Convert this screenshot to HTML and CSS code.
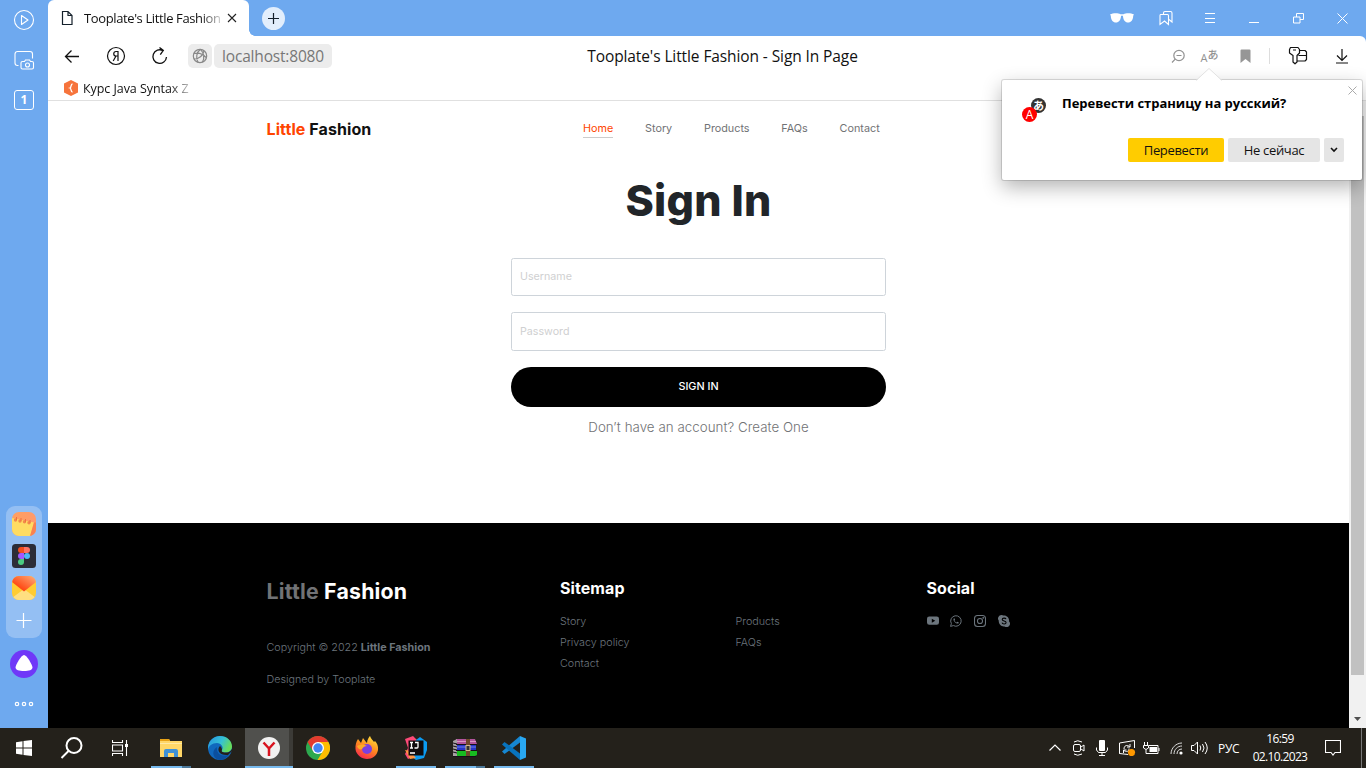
FILE: index.html
```html
<!DOCTYPE html>
<html lang="en">
<head>
<meta charset="utf-8">
<title>Tooplate's Little Fashion - Sign In Page</title>
<link rel="stylesheet" href="styles.css">
</head>
<body>
<div class="desktop">
  <div class="browser">
    <aside class="side">
      <div class="side-top">
        <svg width="22" height="22" viewBox="0 0 22 22" fill="none" stroke="#fff" stroke-width="1.1"><circle cx="11" cy="11" r="9.5"/><path d="M8.5 6.5v9l6.5-4.500z" stroke-linejoin="round"/></svg>
        <svg width="22" height="22" viewBox="0 0 22 22" fill="none" stroke="#fff" stroke-width="1.1"><path d="M5.500 16.500H4.500a2.500 2.500 0 0 1-2.500-2.500V5a2.500 2.500 0 0 1 2.500-2.500h12.500a2.500 2.500 0 0 1 2.500 2.500v4.500"/><path d="M9.500 12.500h2l1-1.500h4l1 1.500h1.500a1.500 1.500 0 0 1 1.500 1.500v4.500a1.500 1.500 0 0 1-1.500 1.500h-9.500a1.500 1.500 0 0 1-1.500-1.500V14a1.500 1.500 0 0 1 1.500-1.500z"/><circle cx="14.500" cy="16" r="2"/></svg>
        <div class="tab-count">1</div>
      </div>
      <div class="side-bottom">
        <div class="dock">
          <svg width="24" height="24" viewBox="0 0 24 24"><defs><linearGradient id="nt" x1="0" x2="1"><stop offset="0" stop-color="#ffa060"/><stop offset="1" stop-color="#ff9a6b"/></linearGradient><clipPath id="rc"><rect width="24" height="24" rx="7"/></clipPath></defs><g clip-path="url(#rc)"><rect width="24" height="24" fill="url(#nt)"/><path d="M0 6l22 4.500L18 25H0z" fill="#ffdc62"/><path d="M22 10.500h2V24h-6z" fill="#f9824f"/><g fill="#f28a4a"><circle cx="3.500" cy="8" r="1.700"/><circle cx="8" cy="9" r="1.700"/><circle cx="12.500" cy="9.800" r="1.700"/><circle cx="17" cy="10.700" r="1.700"/></g><path d="M4.500 5v3M9 6v3M13.500 7v3M18 8v3" stroke="#f0703f" stroke-width="1"/></g></svg>
          <svg width="24" height="24" viewBox="0 0 24 24"><rect width="24" height="24" rx="3.500" fill="#2c2d38"/><path d="M12 3H9a3 3 0 0 0 0 6h3z" fill="#f24e1e"/><path d="M12 3h3a3 3 0 0 1 0 6h-3z" fill="#ff7262"/><path d="M12 9H9a3 3 0 0 0 0 6h3z" fill="#a259ff"/><circle cx="15" cy="12" r="3" fill="#4db8f5"/><path d="M12 15H9a3 3 0 1 0 3 3z" fill="#4bcb83"/></svg>
          <svg width="24" height="24" viewBox="0 0 24 24"><defs><linearGradient id="ml" x1="0" y1="1" x2="1" y2="0"><stop offset=".3" stop-color="#ff4b16"/><stop offset="1" stop-color="#ffae79"/></linearGradient></defs><g clip-path="url(#rc)"><rect width="24" height="24" fill="#ffcc32"/><path d="M0 25v-3l12-9 12 9v3z" fill="#ffdf80"/><path d="M0 0h24v6L12 15.500 0 6z" fill="url(#ml)"/></g></svg>
          <svg width="24" height="24" viewBox="0 0 24 24" stroke="#fff" stroke-width="1.200"><path d="M4.500 12.500h15M11.500 5v15"/></svg>
        </div>
        <svg class="alice" width="28" height="28" viewBox="0 0 28 28"><circle cx="14" cy="14" r="14" fill="#6f38f8"/><path d="M14 5c2.600 0 8.500 10 8.500 12.500S19 21 14 21s-8.500-1-8.500-3.500S11.400 5 14 5z" fill="#fff"/></svg>
        <svg width="20" height="6" viewBox="0 0 20 6" fill="none" stroke="#fff" stroke-width="1.200"><circle cx="3" cy="3" r="1.700"/><circle cx="10" cy="3" r="1.700"/><circle cx="17" cy="3" r="1.700"/></svg>
      </div>
    </aside>

    <div class="window">
      <div class="tabs">
        <div class="tab">
          <svg width="12" height="16" viewBox="0 0 12 16" fill="none" stroke="#14202b" stroke-width="1.200"><path d="M1.500 1.500h5.500l4 4v9H1.500zM7 1.500v4h4"/></svg>
          <span class="tab-title">Tooplate's Little Fashion</span>
          <svg width="10" height="10" viewBox="0 0 10 10" stroke="#222" stroke-width="1.100"><path d="M1 1l8 8M9 1L1 9"/></svg>
        </div>
        <div class="new-tab"><svg width="11" height="11" viewBox="0 0 11 11" stroke="#14202b" stroke-width="1.200"><path d="M0 5.500h11M5.500 0v11"/></svg></div>
        <div class="win-buttons">
          <svg width="24" height="12" viewBox="0 0 24 12" fill="#fff"><path d="M0 2.500C3 1 8 1 10.500 2.200h3C16 1 21 1 24 2.500l-.8 1.200c0 4-2.200 6.800-5.200 6.800-2.800 0-4.800-2.500-5-6.300-.4-.8-1.600-.8-2 0-.2 3.800-2.200 6.300-5 6.300-3 0-5.200-2.800-5.200-6.800z"/></svg>
          <svg width="14" height="16" viewBox="0 0 14 16" fill="none" stroke="#fff" stroke-width="1.100"><path d="M1.500 4.500h7q1 0 1 1v9l-4-3.500-4.500 3.500V5.500q0-1 .5-1z"/><path d="M4.500 4V3q0-1.500 1.500-1.500h5.500q1.500 0 1.500 1.500v9L10 9.500"/></svg>
          <svg width="12" height="12" viewBox="0 0 12 12" stroke="#fff"><path d="M1 1.500h10M1 6.500h10M1 10.500h10"/></svg>
          <svg width="10" height="10" viewBox="0 0 10 10" stroke="#fff"><path d="M0 9.500h10"/></svg>
          <svg width="11" height="11" viewBox="0 0 11 11" fill="none" stroke="#fff"><path d="M3.500 4V.5h7v6H7M.5 4H7v6H.5z"/></svg>
          <svg width="11" height="11" viewBox="0 0 11 11" stroke="#fff"><path d="M.5.5l10 10M10.500.5l-10 10"/></svg>
        </div>
      </div>

      <div class="chrome">
        <div class="toolbar">
          <div class="tools-left">
            <svg width="16" height="16" viewBox="0 0 16 16" fill="none" stroke="#111" stroke-width="1.300"><path d="M15 8.500H1.500M7.500 2.500l-6 6 6 6"/></svg>
            <svg width="20" height="20" viewBox="0 0 20 20" fill="none" stroke="#111" stroke-width="1.200"><circle cx="10" cy="10" r="8.500"/><path d="M12 15V5.500H10c-3 0-3 4.500 0 4.500h2M10 10l-2.800 5"/></svg>
            <svg width="18" height="20" viewBox="0 0 18 20" fill="none" stroke="#111" stroke-width="1.300"><path d="M15.500 11a6.800 6.800 0 1 1-3.500-6.400M8.500 1.500l3.800 3-3 4.200"/></svg>
            <div class="url">
              <span class="globe"><svg width="16" height="16" viewBox="0 0 16 16" fill="none" stroke="#888" stroke-width="1.200"><circle cx="8" cy="8" r="6.700"/><path d="M2 5.500c4-1 9 .5 12 4M2 11c5 0 9-3.500 10-8M8.500 1.300c-4 3-5 8.500-2.500 13M10.500 14c2-4 1.500-9-2-12.700"/></svg></span>
              <span class="host">localhost:8080</span>
            </div>
          </div>
          <div class="page-title">Tooplate's Little Fashion - Sign In Page</div>
          <div class="tools-right">
            <svg width="14" height="15" viewBox="0 0 14 15" fill="none" stroke="#929292" stroke-width="1.200"><circle cx="8" cy="6.500" r="5.200"/><path d="M5.500 6.500h5M4.200 10.200L1 13.500"/></svg>
            <div class="lang"><span>A</span><b>あ</b></div>
            <svg width="11" height="15" viewBox="0 0 11 15" fill="#969696"><path d="M.5 1.500q0-1 1-1h8q1 0 1 1V14l-5-4-5 4z"/></svg>
            <i class="divider"></i>
            <svg width="20" height="20" viewBox="0 0 20 20" fill="none" stroke="#111" stroke-width="1.200" stroke-linejoin="round"><path d="M2.500 1.500h7.500l1.500 2v3.500L9 9.500V16l-2 1.800L5 16V9.500L1.500 7V3.500zM5 4h3M12 4.500h5l1.500 1.500v7.500l-1.500 1.500H9.500M10.500 9.500h8"/></svg>
            <svg width="14" height="16" viewBox="0 0 14 16" fill="none" stroke="#111" stroke-width="1.200"><path d="M7 1v11M2 7.500l5 5 5-5M1 15h12"/></svg>
          </div>
        </div>
        <div class="bookmarks">
          <svg width="16" height="16" viewBox="0 0 16 16"><path d="M8 0l7 3.500v9L8 16l-7-3.500v-9z" fill="#f6743c"/><path d="M9.500 4c-2 0-1 3.500-2.500 4 1.500.5.5 4 2.500 4" fill="none" stroke="#fff" stroke-width="1.300"/></svg>
          <span class="bookmark">Курс Java Syntax Z</span>
        </div>
      </div>

      <div class="viewport">
        <div class="page">
          <header class="site-head">
            <div class="logo"><span>Little</span> Fashion</div>
            <nav class="nav"><a class="active">Home</a><a>Story</a><a>Products</a><a>FAQs</a><a>Contact</a></nav>
          </header>
          <main class="signin">
            <h1>Sign In</h1>
            <form class="form">
              <input class="field" type="text" placeholder="Username">
              <input class="field field-pw" type="password" placeholder="Password">
              <button class="submit" type="button">SIGN IN</button>
              <p class="create">Don’t have an account? Create One</p>
            </form>
          </main>
          <footer class="foot">
            <div class="foot-brand">
              <h2><span>Little</span> Fashion</h2>
              <p>Copyright © 2022 <b>Little Fashion</b></p>
              <p class="designed">Designed by Tooplate</p>
            </div>
            <div class="foot-map">
              <h3>Sitemap</h3>
              <div class="links"><a>Story</a><a>Products</a><a>Privacy policy</a><a>FAQs</a><a>Contact</a></div>
            </div>
            <div class="foot-social">
              <h3>Social</h3>
              <div class="socials">
                <svg width="12" height="12" viewBox="0 0 16 16" fill="#6c757d"><path fill-rule="evenodd" d="M3 2h10q3 0 3 3v5q0 3-3 3H3q-3 0-3-3V5q0-3 3-3zM6.400 4.900v5.400L11 7.600z"/></svg>
                <svg width="12" height="12" viewBox="0 0 16 16" fill="none" stroke="#6c757d" stroke-width="1.300"><path d="M.8 15.200l1-3.800a7 7 0 1 1 2.700 2.700z"/><path d="M5.300 4.200c-1.300 1.300-.8 3 1 5s4 3 5.200 1.700c.4-.6.300-1-.2-1.300l-1.500-.7-1 1C7.500 9.500 6.500 8.500 6 7.200l.8-1-.6-1.600z" fill="#6c757d" stroke="none"/></svg>
                <svg width="12" height="12" viewBox="0 0 16 16" fill="none" stroke="#6c757d" stroke-width="1.400"><rect x=".7" y=".7" width="14.600" height="14.600" rx="4"/><circle cx="8" cy="8" r="3.400"/><circle cx="12.300" cy="3.700" r=".5" fill="#6c757d"/></svg>
                <svg width="12" height="12" viewBox="0 0 16 16"><path d="M4.700 0a4.500 4.500 0 0 1 2.600.8c4.400-.5 8 3.300 7.500 7.700A4.600 4.600 0 0 1 8.600 15.200C4 15.600.6 12 1 7.400A4.600 4.600 0 0 1 4.700 0z" fill="#6c757d"/><path d="M10.700 5.600C10 3.600 5.600 3.700 5.600 6c0 2.600 5.200 1.300 5.200 4 0 2.500-4.900 2.500-5.500.1" fill="none" stroke="#000" stroke-width="1.400"/></svg>
              </div>
            </div>
          </footer>
        </div>
        <div class="scroll"><div class="thumb"></div><svg width="7" height="4" viewBox="0 0 7 4"><path d="M0 0h7L3.500 4z" fill="#505050"/></svg></div>
      </div>
    </div>

    <div class="popup">
      <svg class="popup-tip" width="26" height="13" viewBox="0 0 26 13"><path d="M0 13L13 .5 26 13z" fill="#fff"/><path d="M0 12.500L13 .5l13 12" fill="none" stroke="#e2e2e2"/></svg>
      <svg class="popup-close" width="9" height="9" viewBox="0 0 9 9" stroke="#aaa"><path d="M.5.5l8 8M8.500.5l-8 8"/></svg>
      <div class="popup-head">
        <div class="tr-icon"><b>あ</b><span>A</span></div>
        <strong>Перевести страницу на русский?</strong>
      </div>
      <div class="popup-actions">
        <span class="btn yes">Перевести</span><span class="btn no">Не сейчас</span><span class="btn more"><svg width="8" height="6" viewBox="0 0 8 6" fill="none" stroke="#111" stroke-width="1.600"><path d="M1 1l3 3 3-3"/></svg></span>
      </div>
    </div>
  </div>

  <div class="taskbar">
    <div class="apps">
      <div class="app"><svg width="16" height="16" viewBox="0 0 16 16" fill="#fff"><path d="M0 2.200L6.500 1.200v6.300H0zM7.500 1L16 0v7.500H7.500zM0 8.500h6.500v6.300L0 13.800zM7.500 8.500H16V16l-8.500-1z"/></svg></div>
      <div class="app"><svg width="24" height="24" viewBox="0 0 24 24" fill="none" stroke="#fff" stroke-width="2"><circle cx="14" cy="9.500" r="7.500"/><path d="M8.500 15L1.500 22"/></svg></div>
      <div class="app"><svg width="17" height="16" viewBox="0 0 17 16" fill="none" stroke="#fff" stroke-width="1.100"><path d="M.5 0v2.500h10V0M.5 16v-2.500h10V16M.5 5h10v6H.5zM14.500 0v16"/><path d="M13 4h3v3h-3z" fill="#fff" stroke="none"/></svg></div>
      <div class="app open double first"><svg width="22" height="20" viewBox="0 0 22 20"><path d="M0 1h9l1 2h12v16H0z" fill="#ffd768"/><path d="M0 1h9l1 2H0z" fill="#e8a317"/><path d="M0 5h22v1H0z" fill="#ffe9a3"/><path d="M4 19v-6q0-2 2-2h10q2 0 2 2v6h-4v-4H8v4z" fill="#3f91d6"/></svg></div>
      <div class="app"><svg width="24" height="24" viewBox="0 0 24 24"><defs><linearGradient id="ed" x1="0" y1="0" x2="1" y2=".4"><stop offset="0" stop-color="#2793e0"/><stop offset=".6" stop-color="#35c1d5"/><stop offset="1" stop-color="#66dc5c"/></linearGradient></defs><circle cx="12" cy="12" r="12" fill="#1068bd"/><path d="M0 11C1 4 6 0 12 0c7 0 12 5 12 10.500 0 4-3.500 6-6.500 6-3.500 0-4.500-1.500-3.500-2.500 2-3-1-7-5-7-5 0-8.500 3-9 7z" fill="url(#ed)"/><path d="M9 11c-1 8 6 10.500 12.500 7-3 5-8 7-12 5.500C4 21 4 14 9 11z" fill="#0b4f9e"/><path d="M12 10c-4 4 0 10 8 9l4-4v-2c-1.500 3-4 3.500-6.500 3.500-3.500 0-4.500-1.500-3.500-2.500 0-1-.5-3-2-4z" fill="#24201b"/></svg></div>
      <div class="app open current"><svg width="22" height="22" viewBox="0 0 22 22"><circle cx="11" cy="11" r="11" fill="#f1f1f1"/><path d="M5.500 5.500L11 11.500l5.500-6M11 11v8" fill="none" stroke="#d9131f" stroke-width="2.500"/></svg></div>
      <div class="app"><svg width="24" height="24" viewBox="0 0 24 24"><circle cx="12" cy="12" r="12" fill="#2da94f"/><path d="M12 12L1.600 6A12 12 0 0 1 22.400 6z" fill="#e33b2e"/><path d="M12 6h10.400A12 12 0 0 1 11.500 24L17 15z" fill="#fdbd00"/><path d="M1.600 6L7 15l5-9z" fill="#e33b2e"/><circle cx="12" cy="12" r="6" fill="#fff"/><circle cx="12" cy="12" r="4.700" fill="#4285f4"/></svg></div>
      <div class="app"><svg width="24" height="24" viewBox="0 0 24 24"><defs><linearGradient id="ff" x1=".8" y1="0" x2=".3" y2="1"><stop offset="0" stop-color="#ffe33f"/><stop offset=".5" stop-color="#ff8a1e"/><stop offset="1" stop-color="#f8264f"/></linearGradient></defs><path d="M3 3l3 4 2-5 3 4 1 1c0-3 2-6 3-7 1 3 3 4 4 6l1-1c2 2 3.500 5 3 9-1 6-6 9-11 9S1 19 .5 13C.3 9 1 6 3 3z" fill="url(#ff)"/><circle cx="12" cy="13" r="5" fill="#7a3fe0"/><path d="M2 10c4-2 7-2 10 0-2 0-4 1-5 3-2 1-4 0-5-3z" fill="#ffab24"/></svg></div>
      <div class="app open"><svg width="24" height="24" viewBox="0 0 24 24"><path d="M1 3l8-3 6 6-4 14-7 3-3-5 3-6z" fill="#fc4a78"/><path d="M12 4l4-3 7 5v8l-3 8-8 2-5-4z" fill="#0b9bf2"/><path d="M1 14l5 1 6 7-6 1z" fill="#ff9440"/><path d="M4.500 4.500h15v15h-15z" fill="#100b0d"/><g fill="none" stroke="#fff" stroke-width="1.300"><path d="M6 6.500h3M7.500 6.500V12M6 12h3M11 6.500h3V11q0 1-1 1h-2.500M6 17h5"/></g></svg></div>
      <div class="app open double"><svg width="24" height="18" viewBox="0 0 24 18"><path d="M3 0h19l2 5H3z" fill="#b2549c"/><path d="M3 6h20v5H3z" fill="#2735c8"/><path d="M3 12h21v4l-2 1H3z" fill="#18bd20"/><path d="M4 2.500h19" stroke="#d997c4"/><path d="M4 8h19" stroke="#6f83ea"/><path d="M0 2l4-2v17H0z" fill="#a8a0a3"/><path d="M0 4l4 1M0 7l4 1M0 10l4 1M0 13l4 1M3 5.500h21M3 11.500h21M0 17.500h23" stroke="#161018"/><path d="M13 0h4v17h-4z" fill="#70472b"/><rect x="13" y="6.500" width="4" height="5" fill="#333" stroke="#d2b989"/></svg></div>
      <div class="app open"><svg width="24" height="24" viewBox="0 0 24 24"><path d="M18 0l6 2.500v19L18 24z" fill="#29a8f2"/><path d="M18 0L0 15.500 2.500 18 18 6.500z" fill="#1687d2"/><path d="M18 24L0 8.500 2.500 6 18 17.500z" fill="#0873bd"/></svg></div>
    </div>
    <div class="tray">
      <svg width="12" height="8" viewBox="0 0 12 8" fill="none" stroke="#fff" stroke-width="1.200"><path d="M.5 6.500L6 1l5.500 5.500"/></svg>
      <svg width="12" height="16" viewBox="0 0 12 16" fill="none" stroke="#fff"><rect x=".5" y="4.500" width="7" height="7" rx="1.500"/><path d="M8 7l3-2v6L8 9M1 2q3.500-2.500 8 0M1 14q3.500 2.500 8 0"/></svg>
      <svg width="12" height="16" viewBox="0 0 12 16" fill="none" stroke="#fff"><rect x="3" y="0" width="6" height="11" rx="1" fill="#fff" stroke="none"/><path d="M.5 7.500V10l2 2.500h7l2-2.500V7.500M6 12v3.500M3 15.500h6"/></svg>
      <svg width="17" height="16" viewBox="0 0 17 16" fill="none" stroke="#fff"><path d="M9 14.500L.5 13.500V3L15.500.5V8M.5 3v10.500M5 9c0-3.500 3-4.500 5.500-2.500M11 4v3H8M10 8.500C10 12 7 12 5 10.500M4.500 13v-3h3"/><circle cx="12.500" cy="12.500" r="3.600" fill="#ff9800" stroke="none"/></svg>
      <svg width="17" height="13" viewBox="0 0 17 13" fill="none" stroke="#fff"><path d="M1.500 0v3M4.500 0v3M.5 3.500h5V6L3 7.500.5 6zM3 7.500v4h3M6 3.500h9v8H6"/><path d="M6.500 5h7.500v5H6.500z" fill="#fff" stroke="none"/><path d="M16 6v3"/></svg>
      <svg width="13" height="13" viewBox="0 0 13 13" fill="none" stroke="#ddd"><path d="M1 12C1 6 6 1 12 1M4 12c0-4.500 3.500-8 8-8M7 12c0-3 2-5 5-5"/><circle cx="11" cy="11" r="1.600" fill="#fff" stroke="none"/></svg>
      <svg width="17" height="14" viewBox="0 0 17 14" fill="none" stroke="#fff"><path d="M.5 4.500H3L6.500 1v12L3 9.500H.5zM9 4.500q1.500 2.500 0 5M11.500 3q3 4 0 8M14 1q4.500 6 0 12"/></svg>
      <span class="lang-ind">РУС</span>
      <div class="clock"><span>16:59</span><span class="date">02.10.2023</span></div>
      <svg width="16" height="16" viewBox="0 0 16 16" fill="none" stroke="#fff" stroke-width="1.100"><path d="M.5.5h15v12H10L8 15l-2-2.500H.5z"/></svg>
      <i class="peek"></i>
    </div>
  </div>
</div>
</body>
</html>
```
FILE: styles.css
```css
* { box-sizing: border-box; }
body { margin: 0; overflow: hidden; font-family: "Open Sans", "Noto Sans", sans-serif; }
svg { display: block; flex: none; }
h1, h2, h3, p { margin: 0; }
.desktop { width: 1366px; height: 768px; display: grid; grid-template-rows: 728px 40px; }
.browser { position: relative; display: grid; grid-template-columns: 48px 1fr; background: #6ea9ef; }

/* side panel */
.side { display: flex; flex-direction: column; justify-content: space-between; align-items: center; }
.side-top { display: flex; flex-direction: column; align-items: center; gap: 18px; padding-top: 9px; }
.tab-count { width: 20px; height: 20px; margin-top: 1px; border: 1px solid #fff; border-radius: 3px; color: #fff; font: 700 12px/18px "Open Sans", sans-serif; text-align: center; }
.side-bottom { display: flex; flex-direction: column; align-items: center; padding-bottom: 21px; }
.dock { width: 36px; height: 132px; padding-top: 6px; border-radius: 9px; background: #94bff3; display: flex; flex-direction: column; align-items: center; gap: 8px; }
.alice { margin: 12px 0 23px; }

/* tab strip */
.window { display: grid; grid-template-rows: 36px 65px 1fr; min-width: 0; }
.tabs { display: flex; align-items: center; }
.tab { position: relative; width: 201px; height: 36px; padding-left: 13px; display: flex; align-items: center; background: #fff; border-radius: 6px 6px 0 0; }
.tab::after { content: ""; position: absolute; left: 100%; bottom: 0; width: 6px; height: 6px; background: radial-gradient(circle at 100% 0, transparent 5.500px, #fff 6px); }
.tab-title { width: 137px; margin: 0 6px 0 11px; overflow: hidden; white-space: nowrap; font-size: 13px; letter-spacing: -.38px; color: #111; -webkit-mask-image: linear-gradient(90deg, #000 85%, rgba(0,0,0,.2)); mask-image: linear-gradient(90deg, #000 85%, rgba(0,0,0,.2)); }
.new-tab { width: 23px; height: 23px; margin-left: 13px; border-radius: 50%; background: #e2eefc; display: grid; place-items: center; }
.win-buttons { margin-left: auto; padding-right: 2px; display: grid; grid-template-columns: repeat(6, 44px); place-items: center; }

/* toolbar */
.chrome { background: #fff; border-bottom: 1px solid #e0e0e0; border-radius: 0 6px 0 0; }
.toolbar { height: 40px; display: grid; grid-template-columns: 400px 549px 1fr; align-items: center; }
.tools-left { display: flex; align-items: center; padding-left: 16px; }
.tools-left > svg:nth-child(2) { margin: 0 25px 0 26px; }
.url { display: flex; gap: 2px; margin-left: 19px; }
.globe, .host { height: 24px; border-radius: 5px; background: #ececec; }
.globe { width: 24px; display: grid; place-items: center; }
.host { width: 118px; text-align: center; font-size: 15.500px; line-height: 24px; color: #777; letter-spacing: -.18px; }
.page-title { text-align: center; white-space: nowrap; font-size: 15.500px; letter-spacing: -.1px; color: #111; }
.tools-right { padding-left: 165px; display: grid; grid-template-columns: 32px 31px 40px 9px 48px 40px; place-items: center; }
.lang { display: flex; align-items: flex-end; height: 15px; color: #929292; font-size: 11px; line-height: 12px; }
.lang b { height: 15px; font: 500 11px/10px "Noto Sans CJK JP", sans-serif; }
.divider { width: 1px; height: 16px; background: #ddd; }
.bookmarks { display: flex; align-items: center; height: 24px; padding-left: 15px; gap: 4px; }
.bookmark { width: 110px; white-space: nowrap; font-size: 12.500px; letter-spacing: -.06px; color: #111; -webkit-mask-image: linear-gradient(90deg, #000 78%, rgba(0,0,0,.2) 98%); mask-image: linear-gradient(90deg, #000 78%, rgba(0,0,0,.2) 98%); }

/* page */
.viewport { display: grid; grid-template-columns: 1301px 17px; font-family: Inter, sans-serif; }
.page { background: #fff; display: grid; grid-template-rows: 56px 366px 205px; }
.site-head { display: flex; align-items: center; padding-left: 218.500px; }
.logo { width: 316.500px; font-size: 16px; font-weight: 700; color: #111; letter-spacing: .08px; }
.logo span { color: #ff4400; }
.nav { display: flex; gap: 31.800px; font-size: 10.800px; color: #717275; }
.nav a { line-height: 17px; border-bottom: 1px solid transparent; }
.nav .active { color: #ff4400; border-color: #ccc; }
.signin { display: flex; flex-direction: column; align-items: center; padding-top: 17px; }
.signin h1 { font-size: 43px; line-height: 52px; font-weight: 800; color: #212529; letter-spacing: .25px; }
.form { width: 375px; margin-top: 32px; display: flex; flex-direction: column; }
.field { height: 38px; padding: 0 8px 2px; border: 1px solid #ced4da; border-radius: 2.500px; font: 400 10.700px Inter, sans-serif; }
.field::placeholder { color: #cfd0d1; opacity: 1; }
.field-pw { height: 39px; margin: 16px 0; padding-bottom: 0; }
.submit { height: 40px; border: 0; border-radius: 20px; background: #000; color: #fff; font: 500 10.800px Inter, sans-serif; padding-bottom: 3px; }
.create { margin-top: 11px; text-align: center; font-size: 13.300px; line-height: 18px; font-weight: 300; letter-spacing: .05px; color: #717275; }

/* footer */
.foot { background: #000; color: #6c757d; padding: 55px 0 0 218.500px; display: grid; grid-template-columns: 293.500px 366.500px 1fr; font-size: 10.750px; font-weight: 300; }
.foot h2 { font-size: 21.300px; line-height: 27px; font-weight: 700; color: #fff; letter-spacing: .2px; }
.foot h2 span { color: #717275; }
.foot-brand p { margin-top: 34px; line-height: 17px; }
.foot-brand b { font-weight: 700; }
.foot-brand .designed { margin-top: 15px; }
.foot h3 { font-size: 16px; line-height: 20px; font-weight: 700; color: #fff; letter-spacing: .08px; }
.links { display: grid; grid-template-columns: 175.500px 1fr; line-height: 21px; margin-top: 13px; }
.socials { display: flex; gap: 11.700px; margin-top: 17px; }
.scroll { background: #f1f1f1; padding-top: 15px; display: flex; flex-direction: column; align-items: center; }
.thumb { width: 13px; height: 559px; margin-bottom: 42px; background: #c1c1c1; }

/* translation prompt */
.popup { position: absolute; left: 1002px; top: 80px; width: 360px; height: 100px; background: #fff; border-radius: 2px; box-shadow: 0 0 0 1px rgba(0,0,0,.13), 0 7px 20px rgba(0,0,0,.3); padding: 14px 18px 18px 20px; display: flex; flex-direction: column; justify-content: space-between; }
.popup-tip { position: absolute; left: 194px; top: -12px; }
.popup-close { position: absolute; right: 5px; top: 6px; }
.popup-head { display: flex; gap: 16px; font-size: 13px; color: #000; line-height: 19px; }
.popup-head strong { letter-spacing: -.03px; white-space: nowrap; }
.tr-icon { position: relative; width: 24px; height: 24px; margin-top: 4px; flex: none; }
.tr-icon b, .tr-icon span { position: absolute; width: 15px; height: 15px; border-radius: 50%; color: #fff; text-align: center; }
.tr-icon b { right: 0; top: 0; background: #333; font: 700 11px/15px "Noto Sans CJK JP", sans-serif; }
.tr-icon span { left: 0; bottom: 0; background: #f00; font-size: 12px; font-weight: 500; line-height: 15px; }
.popup-actions { display: flex; justify-content: flex-end; gap: 4px; }
.btn { height: 24px; border-radius: 2px; background: #e5e5e5; display: grid; place-items: center; font-size: 13px; letter-spacing: -.32px; color: #111; }
.yes { width: 96px; background: #fc0; }
.no { width: 92px; }
.more { width: 20px; }

/* taskbar */
.taskbar { background: #24211b; display: flex; justify-content: space-between; color: #fff; }
.apps { display: flex; }
.app { width: 48px; position: relative; display: grid; place-items: center; }
.first, .first ~ .app { margin-right: 1px; width: 48px; }
.first { margin-left: 3px; }
.open::after { content: ""; position: absolute; left: 4px; right: 4px; bottom: 0; height: 2px; background: #76b9ed; }
.double::after { background: linear-gradient(90deg, #76b9ed 78%, #4c7899 78%); }
.current { background: linear-gradient(90deg, #50504d 44px, #3c3b37 44px); }
.current::after { left: 0; right: 0; }
.tray { display: flex; align-items: center; }
.tray > svg:nth-child(1) { margin-right: 12px; }
.tray > svg:nth-child(2) { margin-right: 11px; }
.tray > svg:nth-child(3) { margin-right: 11px; }
.tray > svg:nth-child(4) { margin-right: 7px; }
.tray > svg:nth-child(5) { margin-right: 10px; }
.tray > svg:nth-child(6) { margin-right: 8px; }
.tray > svg:nth-child(7) { margin-right: 10px; }
.lang-ind { width: 23px; font-size: 12px; letter-spacing: -.3px; }
.clock { width: 62px; margin: 0 14px 0 8px; display: flex; flex-direction: column; align-items: center; font-size: 12px; line-height: 18px; letter-spacing: -.6px; }
.date { letter-spacing: -.65px; }
.peek { width: 1px; height: 40px; margin: 0 4px 0 20px; background: #777; }
```
